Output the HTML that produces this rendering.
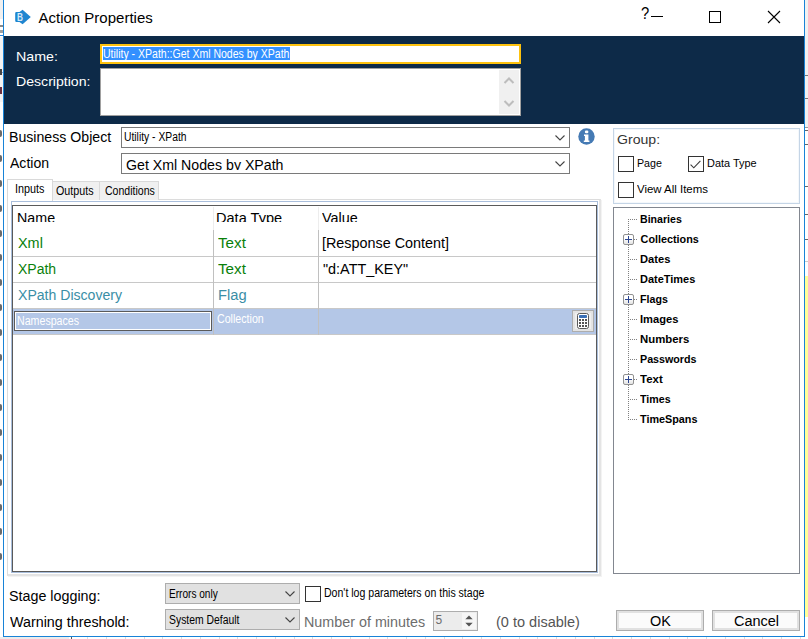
<!DOCTYPE html>
<html lang="en">
<head>
<meta charset="utf-8">
<title>Action Properties</title>
<style>
html,body{margin:0;padding:0;}
body{width:808px;height:639px;position:relative;overflow:hidden;background:#fff;font-family:"Liberation Sans",sans-serif;}
.a{position:absolute;box-sizing:border-box;}
.t{position:absolute;white-space:nowrap;transform-origin:0 0;line-height:normal;font-family:"Liberation Sans",sans-serif;}
svg{position:absolute;overflow:visible;}
.cb{position:absolute;box-sizing:border-box;width:16px;height:16px;border:1px solid #333;background:#fff;}
.hl{position:absolute;height:1px;background:#c8c8c8;}
.vl{position:absolute;width:1px;background:#c0c0c0;}
.dot-h{position:absolute;height:1px;background-image:linear-gradient(to right,#808080 50%,transparent 50%);background-size:2px 1px;}
.dot-v{position:absolute;width:1px;background-image:linear-gradient(to bottom,#808080 50%,transparent 50%);background-size:1px 2px;}
.plus{position:absolute;box-sizing:border-box;width:11px;height:11px;border:1px solid #919191;border-radius:2px;background:linear-gradient(#fff 40%,#e2e2e2);}
.plus:before{content:"";position:absolute;left:1px;top:4px;width:7px;height:1px;background:#2b4590;}
.plus:after{content:"";position:absolute;left:4px;top:1px;width:1px;height:7px;background:#2b4590;}
</style>
</head>
<body>
<!-- background behind dialog -->
<div class="a" id="bg-left" style="left:0;top:0;width:3px;height:639px;background:#fff;"></div>
<div class="a" style="left:0;top:0;width:3px;height:19px;background:#f0f0f0;"></div>
<div class="a" style="left:0;top:25px;width:3px;height:2px;background:#8a8a8a;"></div>
<div class="a" style="left:0;top:30px;width:3px;height:3px;background:#a0a0a0;"></div>
<div class="a" style="left:0;top:35px;width:3px;height:1px;background:#2b7fd6;"></div>
<div class="a" style="left:0;top:37px;width:3px;height:65px;background:#f4f4f4;"></div>
<div class="a" style="left:0;top:72px;width:3px;height:1px;background:#7aa7dc;"></div>
<div class="a" style="left:0;top:130px;width:2px;height:7px;background:#6a6a6a;border-radius:0 2px 2px 0;"></div><div class="a" style="left:0;top:155px;width:2px;height:7px;background:#6a6a6a;border-radius:0 2px 2px 0;"></div><div class="a" style="left:0;top:180px;width:2px;height:7px;background:#6a6a6a;border-radius:0 2px 2px 0;"></div><div class="a" style="left:0;top:205px;width:2px;height:7px;background:#6a6a6a;border-radius:0 2px 2px 0;"></div><div class="a" style="left:0;top:230px;width:2px;height:7px;background:#6a6a6a;border-radius:0 2px 2px 0;"></div><div class="a" style="left:0;top:254px;width:2px;height:7px;background:#6a6a6a;border-radius:0 2px 2px 0;"></div><div class="a" style="left:0;top:279px;width:2px;height:7px;background:#6a6a6a;border-radius:0 2px 2px 0;"></div><div class="a" style="left:0;top:304px;width:2px;height:7px;background:#6a6a6a;border-radius:0 2px 2px 0;"></div><div class="a" style="left:0;top:329px;width:2px;height:7px;background:#6a6a6a;border-radius:0 2px 2px 0;"></div><div class="a" style="left:0;top:354px;width:2px;height:7px;background:#6a6a6a;border-radius:0 2px 2px 0;"></div><div class="a" style="left:0;top:379px;width:2px;height:7px;background:#6a6a6a;border-radius:0 2px 2px 0;"></div><div class="a" style="left:0;top:404px;width:2px;height:7px;background:#6a6a6a;border-radius:0 2px 2px 0;"></div><div class="a" style="left:0;top:429px;width:2px;height:7px;background:#6a6a6a;border-radius:0 2px 2px 0;"></div><div class="a" style="left:0;top:454px;width:2px;height:7px;background:#6a6a6a;border-radius:0 2px 2px 0;"></div><div class="a" style="left:0;top:479px;width:2px;height:7px;background:#6a6a6a;border-radius:0 2px 2px 0;"></div><div class="a" style="left:0;top:504px;width:2px;height:7px;background:#6a6a6a;border-radius:0 2px 2px 0;"></div><div class="a" style="left:0;top:528px;width:2px;height:7px;background:#6a6a6a;border-radius:0 2px 2px 0;"></div><div class="a" style="left:0;top:553px;width:2px;height:7px;background:#6a6a6a;border-radius:0 2px 2px 0;"></div><div class="a" style="left:0;top:69px;width:2px;height:6px;background:#444;"></div><div class="a" style="left:0;top:87px;width:2px;height:7px;background:#6a3040;"></div>
<div class="a" id="bg-right" style="left:805px;top:0;width:3px;height:639px;background:#fff;"></div>
<div class="a" style="left:805px;top:0;width:3px;height:127px;background:#f1f1f1;"></div>
<div class="a" style="left:805px;top:75px;width:3px;height:1px;background:#777;"></div>
<div class="a" style="left:805px;top:98px;width:3px;height:1px;background:#777;"></div>
<div class="a" style="left:805px;top:127px;width:3px;height:1px;background:#9a9a9a;"></div>
<div class="a" style="left:805px;top:130px;width:3px;height:1px;background:#666;"></div>
<div class="a" style="left:805px;top:144px;width:3px;height:1px;background:#666;"></div>
<div class="a" style="left:805px;top:186px;width:3px;height:1px;background:#666;"></div>
<div class="a" style="left:805px;top:214px;width:3px;height:1px;background:#666;"></div>
<div class="a" style="left:805px;top:239px;width:3px;height:1px;background:#666;"></div>
<div class="a" style="left:805px;top:261px;width:3px;height:1px;background:#ccc;"></div>
<div class="a" style="left:805px;top:276px;width:3px;height:341px;background:#ffff99;"></div>
<div class="a" id="bg-bottom" style="left:0;top:637px;width:808px;height:2px;background:#fff;"></div>
<div class="a" style="left:0;top:637px;width:69px;height:2px;background:#ececec;"></div>
<div class="a" style="left:71px;top:637px;width:1px;height:2px;background:#555;"></div>
<div class="a" style="left:87px;top:637px;width:1px;height:2px;background:#dcdcdc;"></div><div class="a" style="left:106px;top:637px;width:1px;height:2px;background:#dcdcdc;"></div><div class="a" style="left:125px;top:637px;width:1px;height:2px;background:#dcdcdc;"></div><div class="a" style="left:144px;top:637px;width:1px;height:2px;background:#dcdcdc;"></div><div class="a" style="left:162px;top:637px;width:1px;height:2px;background:#dcdcdc;"></div><div class="a" style="left:181px;top:637px;width:1px;height:2px;background:#dcdcdc;"></div><div class="a" style="left:200px;top:637px;width:1px;height:2px;background:#dcdcdc;"></div><div class="a" style="left:219px;top:637px;width:1px;height:2px;background:#dcdcdc;"></div><div class="a" style="left:237px;top:637px;width:1px;height:2px;background:#dcdcdc;"></div><div class="a" style="left:256px;top:637px;width:1px;height:2px;background:#dcdcdc;"></div><div class="a" style="left:275px;top:637px;width:1px;height:2px;background:#dcdcdc;"></div><div class="a" style="left:294px;top:637px;width:1px;height:2px;background:#dcdcdc;"></div><div class="a" style="left:312px;top:637px;width:1px;height:2px;background:#dcdcdc;"></div><div class="a" style="left:331px;top:637px;width:1px;height:2px;background:#dcdcdc;"></div><div class="a" style="left:350px;top:637px;width:1px;height:2px;background:#dcdcdc;"></div><div class="a" style="left:369px;top:637px;width:1px;height:2px;background:#dcdcdc;"></div><div class="a" style="left:387px;top:637px;width:1px;height:2px;background:#dcdcdc;"></div><div class="a" style="left:406px;top:637px;width:1px;height:2px;background:#dcdcdc;"></div><div class="a" style="left:425px;top:637px;width:1px;height:2px;background:#dcdcdc;"></div><div class="a" style="left:444px;top:637px;width:1px;height:2px;background:#dcdcdc;"></div><div class="a" style="left:462px;top:637px;width:1px;height:2px;background:#dcdcdc;"></div><div class="a" style="left:481px;top:637px;width:1px;height:2px;background:#dcdcdc;"></div><div class="a" style="left:500px;top:637px;width:1px;height:2px;background:#dcdcdc;"></div><div class="a" style="left:519px;top:637px;width:1px;height:2px;background:#dcdcdc;"></div><div class="a" style="left:537px;top:637px;width:1px;height:2px;background:#dcdcdc;"></div><div class="a" style="left:556px;top:637px;width:1px;height:2px;background:#dcdcdc;"></div><div class="a" style="left:575px;top:637px;width:1px;height:2px;background:#dcdcdc;"></div><div class="a" style="left:594px;top:637px;width:1px;height:2px;background:#dcdcdc;"></div><div class="a" style="left:612px;top:637px;width:1px;height:2px;background:#dcdcdc;"></div><div class="a" style="left:631px;top:637px;width:1px;height:2px;background:#dcdcdc;"></div><div class="a" style="left:650px;top:637px;width:1px;height:2px;background:#dcdcdc;"></div><div class="a" style="left:669px;top:637px;width:1px;height:2px;background:#dcdcdc;"></div><div class="a" style="left:687px;top:637px;width:1px;height:2px;background:#dcdcdc;"></div><div class="a" style="left:706px;top:637px;width:1px;height:2px;background:#dcdcdc;"></div><div class="a" style="left:725px;top:637px;width:1px;height:2px;background:#dcdcdc;"></div><div class="a" style="left:744px;top:637px;width:1px;height:2px;background:#dcdcdc;"></div><div class="a" style="left:762px;top:637px;width:1px;height:2px;background:#dcdcdc;"></div><div class="a" style="left:781px;top:637px;width:1px;height:2px;background:#dcdcdc;"></div><div class="a" style="left:800px;top:637px;width:1px;height:2px;background:#dcdcdc;"></div>
<!-- dialog -->
<div class="a" id="dlg" style="left:3px;top:-1px;width:802px;height:638px;border:1px solid #1883d7;background:#fff;"></div>
<!-- title bar icon -->
<svg style="left:14px;top:9px;" width="18" height="16" viewBox="0 0 18 16">
  <path d="M1.2 4.2 Q1.2 3 2.4 3 L5.5 3 L8.6 0.8 L16.8 8 L8.6 15.2 L5.5 13 L2.4 13 Q1.2 13 1.2 11.8 Z" fill="#1f86d0"/>
</svg>
<span class="t" style="left:16.8px;top:10.9px;font-size:11.5px;font-weight:bold;color:#d6e8f8;transform:scaleX(0.72);">B</span>
<!-- window controls -->
<div class="a" style="left:651px;top:16px;width:12px;height:1px;background:#000;"></div>
<div class="a" style="left:709px;top:11px;width:12px;height:12px;border:1px solid #000;"></div>
<svg style="left:768px;top:11px;" width="12" height="12" viewBox="0 0 12 12"><path d="M0 0 L12 12 M12 0 L0 12" stroke="#000" stroke-width="1.1" fill="none"/></svg>

<!-- navy header -->
<div class="a" id="navy" style="left:4px;top:36px;width:800px;height:88px;background:#0d2a48;"></div>
<div class="a" id="name-in" style="left:100px;top:44px;width:421px;height:20px;border:2px solid #fdc20f;background:#fff;"></div>
<div class="a" id="name-sel" style="left:103px;top:47px;width:187px;height:13px;background:#3390ff;"></div>
<div class="a" id="desc" style="left:100px;top:68px;width:421px;height:48px;border:1px solid #a0a0a0;background:#fff;"></div>
<div class="a" id="desc-sb" style="left:499px;top:70px;width:20px;height:44px;background:#f0f0f0;"></div>
<svg style="left:504px;top:77px;" width="10" height="30" viewBox="0 0 10 30"><path d="M0.5 6 L5 1.5 L9.5 6 M0.5 24 L5 28.5 L9.5 24" stroke="#bdbdbd" stroke-width="2" fill="none"/></svg>

<!-- Business Object / Action combos -->
<div class="a" id="cmb1" style="left:121px;top:127px;width:449px;height:21px;border:1px solid #7a7a7a;background:#fff;"></div>
<svg style="left:554.5px;top:135px;" width="10" height="6" viewBox="0 0 10 6"><path d="M0.5 0.5 L5 5 L9.5 0.5" stroke="#444" stroke-width="1.1" fill="none"/></svg>
<div class="a" id="cmb2" style="left:121px;top:153px;width:449px;height:21px;border:1px solid #7a7a7a;background:#fff;overflow:hidden;">
  <span class="t" id="cmb2t" style="left:3.9px;top:3.1px;font-size:14px;color:#000;transform:scaleX(1.012);clip-path:inset(0 0 3.2px 0);">Get Xml Nodes by XPath</span>
</div>
<svg style="left:554.5px;top:161px;" width="10" height="6" viewBox="0 0 10 6"><path d="M0.5 0.5 L5 5 L9.5 0.5" stroke="#444" stroke-width="1.1" fill="none"/></svg>
<!-- info icon -->
<svg style="left:577.5px;top:127.7px;" width="17" height="17" viewBox="0 0 17 17"><circle cx="8.5" cy="8.5" r="8.2" fill="#457ab4"/><rect x="6.9" y="2.4" width="3.5" height="2.9" rx="1.3" fill="#fff"/><path d="M6 6.6 H10.4 V12.6 H11.4 V13.9 H5.8 V12.6 H6.9 V7.9 H6 Z" fill="#fff"/></svg>

<!-- tabs -->
<div class="a" id="tabpanel" style="left:7px;top:199px;width:594px;height:377px;border:1px solid #dcdcdc;border-right:2px solid #e4e4e4;border-bottom:2px solid #e4e4e4;box-shadow:1px 1px 0 #f3f3f3;background:#fff;"></div>
<div class="a" id="tab2" style="left:52px;top:181px;width:48px;height:19px;border:1px solid #d9d9d9;border-bottom:none;background:#f0f0f0;"></div>
<div class="a" id="tab3" style="left:99px;top:181px;width:60px;height:19px;border:1px solid #d9d9d9;border-bottom:none;background:#f0f0f0;"></div>
<div class="a" id="tab1" style="left:7px;top:179px;width:46px;height:22px;border:1px solid #d9d9d9;border-bottom:none;background:#fff;"></div>

<!-- list box -->
<div class="a" id="lb-outer" style="left:11px;top:201px;width:587px;height:372px;border:1px solid #a9bedb;"></div>
<div class="a" id="listbox" style="left:12px;top:205px;width:585px;height:367px;border:1px solid #5a5a5a;background:#fff;overflow:hidden;">
  <span class="t" style="left:3.9px;top:4.2px;font-size:14px;color:#000;clip-path:inset(0 0 4.2px 0);transform:scaleX(1.02);">Name</span>
  <span class="t" style="left:203.4px;top:4.2px;font-size:14px;color:#000;clip-path:inset(0 0 4.2px 0);transform:scaleX(1.04);">Data Type</span>
  <span class="t" style="left:308.9px;top:4.2px;font-size:14px;color:#000;clip-path:inset(0 0 4.2px 0);transform:scaleX(1.03);">Value</span>
</div>
<div class="vl" style="left:213px;top:207px;height:23px;background:#ededed;"></div>
<div class="vl" style="left:318px;top:207px;height:23px;background:#ededed;"></div>
<div class="a" id="selrow" style="left:13px;top:308px;width:583px;height:27px;background:#b4c7e7;"></div>
<div class="hl" style="left:13px;top:256px;width:583px;"></div>
<div class="hl" style="left:13px;top:282px;width:583px;"></div>
<div class="hl" style="left:13px;top:308px;width:583px;"></div>
<div class="hl" style="left:13px;top:334px;width:583px;"></div>
<div class="vl" style="left:213px;top:230px;height:105px;"></div>
<div class="vl" style="left:318px;top:230px;height:105px;"></div>
<div class="a" id="editbox" style="left:14px;top:311px;width:198px;height:20px;border:1px solid #5a5a5a;box-shadow:inset 0 0 0 1px #fff;background:#b4c7e7;"></div>
<!-- calculator button -->
<div class="a" id="calcbtn" style="left:572px;top:310px;width:22px;height:22px;border:1px solid #adadad;background:#efefef;box-shadow:inset 0 0 0 2px #e3e3e3;"></div>
<svg style="left:577px;top:313px;" width="12" height="16" viewBox="0 0 12 16">
  <rect x="0.5" y="0.5" width="11" height="15" rx="2" fill="#fff" stroke="#5a5a5a" stroke-width="1"/>
  <rect x="2" y="2" width="8" height="3" rx="0.8" fill="#3a6fb5"/>
  <g fill="#555"><rect x="2" y="6" width="2" height="2"/><rect x="5" y="6" width="2" height="2"/><rect x="8" y="6" width="2" height="2"/>
  <rect x="2" y="9" width="2" height="2"/><rect x="5" y="9" width="2" height="2"/><rect x="8" y="9" width="2" height="2"/>
  <rect x="2" y="12" width="2" height="2"/><rect x="5" y="12" width="2" height="2"/><rect x="8" y="12" width="2" height="2"/></g>
</svg>

<!-- group box -->
<div class="a" id="grp" style="left:613px;top:128px;width:187px;height:76px;border:1px solid #c5d5e6;box-shadow:inset 0 0 0 1px #f4f8fc;"></div>
<div class="cb" style="left:618px;top:156px;"></div>
<div class="cb" style="left:688px;top:156px;"></div>
<svg style="left:690px;top:159.7px;" width="11" height="9" viewBox="0 0 11 9"><path d="M0.6 4.6 L3.8 7.8 L10.4 0.8" stroke="#3a3a3a" stroke-width="1.1" fill="none"/></svg>
<div class="cb" style="left:618px;top:182px;"></div>

<!-- tree box -->
<div class="a" id="tree" style="left:613px;top:207px;width:187px;height:367px;border:1px solid #828790;background:#fff;"></div>
<div class="dot-v" style="left:628px;top:219px;height:201px;"></div>
<div class="dot-h" style="left:630px;top:219px;width:7px;"></div>
<div class="dot-h" style="left:634px;top:239px;width:4px;"></div>
<div class="plus" style="left:623px;top:234px;"></div>
<div class="dot-h" style="left:630px;top:259px;width:7px;"></div>
<div class="dot-h" style="left:630px;top:279px;width:7px;"></div>
<div class="dot-h" style="left:634px;top:299px;width:4px;"></div>
<div class="plus" style="left:623px;top:294px;"></div>
<div class="dot-h" style="left:630px;top:319px;width:7px;"></div>
<div class="dot-h" style="left:630px;top:339px;width:7px;"></div>
<div class="dot-h" style="left:630px;top:359px;width:7px;"></div>
<div class="dot-h" style="left:634px;top:379px;width:4px;"></div>
<div class="plus" style="left:623px;top:374px;"></div>
<div class="dot-h" style="left:630px;top:399px;width:7px;"></div>
<div class="dot-h" style="left:630px;top:419px;width:7px;"></div>

<!-- bottom controls -->
<div class="a" id="cmb3" style="left:165px;top:583px;width:135px;height:21px;border:1px solid #adadad;background:#e1e1e1;"></div>
<svg style="left:285px;top:591px;" width="10" height="6" viewBox="0 0 10 6"><path d="M0.5 0.5 L5 5 L9.5 0.5" stroke="#444" stroke-width="1.1" fill="none"/></svg>
<div class="a" id="cmb4" style="left:165px;top:609px;width:135px;height:21px;border:1px solid #adadad;background:#e1e1e1;"></div>
<svg style="left:285px;top:617px;" width="10" height="6" viewBox="0 0 10 6"><path d="M0.5 0.5 L5 5 L9.5 0.5" stroke="#444" stroke-width="1.1" fill="none"/></svg>
<div class="cb" style="left:305px;top:586px;"></div>
<div class="a" id="spin" style="left:433px;top:611px;width:45px;height:20px;border:1px solid #adadad;background:#ececec;"></div>
<div class="a" id="spinbtn" style="left:462px;top:613px;width:14px;height:16px;background:#f6f6f6;"></div>
<svg style="left:465px;top:615px;" width="8" height="12" viewBox="0 0 8 12"><path d="M0.3 4.2 L4 0.4 L7.7 4.2 Z M0.3 7.8 L4 11.6 L7.7 7.8 Z" fill="#555"/></svg>
<div class="a" id="okbtn" style="left:616px;top:610px;width:88px;height:21px;border:1px solid #adadad;box-shadow:inset 0 0 0 2px #e1e1e1;background:#fbfbfb;"></div>
<div class="a" id="cancelbtn" style="left:712px;top:610px;width:88px;height:21px;border:1px solid #adadad;box-shadow:inset 0 0 0 2px #e1e1e1;background:#fbfbfb;"></div>

<span class="t" style="left:38.50px;top:9.22px;font-size:15px;color:#000;transform:scaleX(1.0000);">Action Properties</span>
<span class="t" style="left:16.49px;top:48.85px;font-size:13.2px;color:#fff;transform:scaleX(1.0795);">Name:</span>
<span class="t" style="left:16.04px;top:73.55px;font-size:13.2px;color:#fff;transform:scaleX(1.0693);">Description:</span>
<span class="t" style="left:102.83px;top:46.94px;font-size:12px;color:#fff;transform:scaleX(0.8762);">Utility - XPath::Get Xml Nodes by XPath</span>
<span class="t" style="left:9.00px;top:129.18px;font-size:14.5px;color:#000;transform:scaleX(0.9752);">Business Object</span>
<span class="t" style="left:9.72px;top:155.18px;font-size:14.5px;color:#000;transform:scaleX(0.9689);">Action</span>
<span class="t" style="left:124.35px;top:130.14px;font-size:12px;color:#000;transform:scaleX(0.8601);">Utility - XPath</span>
<span class="t" style="left:14.86px;top:182.44px;font-size:12px;color:#000;transform:scaleX(0.9005);">Inputs</span>
<span class="t" style="left:56.14px;top:184.34px;font-size:12px;color:#000;transform:scaleX(0.8939);">Outputs</span>
<span class="t" style="left:105.09px;top:184.34px;font-size:12px;color:#000;transform:scaleX(0.8775);">Conditions</span>
<span class="t" style="left:17.84px;top:234.83px;font-size:14px;color:#0a800a;transform:scaleX(1.0304);">Xml</span>
<span class="t" style="left:217.58px;top:234.83px;font-size:14px;color:#0a800a;transform:scaleX(1.0873);">Text</span>
<span class="t" style="left:321.99px;top:234.83px;font-size:14px;color:#000;transform:scaleX(1.0261);">[Response Content]</span>
<span class="t" style="left:18.00px;top:261.03px;font-size:14px;color:#0a800a;transform:scaleX(1.0000);">XPath</span>
<span class="t" style="left:217.58px;top:261.03px;font-size:14px;color:#0a800a;transform:scaleX(1.0873);">Text</span>
<span class="t" style="left:322.99px;top:261.03px;font-size:14px;color:#000;transform:scaleX(1.0285);">"d:ATT_KEY"</span>
<span class="t" style="left:17.84px;top:287.03px;font-size:14px;color:#3a8ea6;transform:scaleX(1.0051);">XPath Discovery</span>
<span class="t" style="left:217.77px;top:287.03px;font-size:14px;color:#3a8ea6;transform:scaleX(1.0501);">Flag</span>
<span class="t" style="left:16.92px;top:314.14px;font-size:12px;color:#fff;transform:scaleX(0.8867);">Namespaces</span>
<span class="t" style="left:216.59px;top:312.14px;font-size:12px;color:#fff;transform:scaleX(0.8875);">Collection</span>
<span class="t" style="left:617.18px;top:131.69px;font-size:13.6px;color:#333;transform:scaleX(1.0358);">Group:</span>
<span class="t" style="left:637.38px;top:157.43px;font-size:10.8px;color:#000;transform:scaleX(0.9872);">Page</span>
<span class="t" style="left:707.14px;top:157.43px;font-size:10.8px;color:#000;transform:scaleX(1.0109);">Data Type</span>
<span class="t" style="left:636.98px;top:183.23px;font-size:10.8px;color:#000;transform:scaleX(1.0591);">View All Items</span>
<span class="t" style="left:640.46px;top:213.03px;font-size:10.8px;color:#000;font-weight:bold;transform:scaleX(0.9804);">Binaries</span>
<span class="t" style="left:640.60px;top:233.03px;font-size:10.8px;color:#000;font-weight:bold;transform:scaleX(1.0000);">Collections</span>
<span class="t" style="left:640.15px;top:253.03px;font-size:10.8px;color:#000;font-weight:bold;transform:scaleX(1.0324);">Dates</span>
<span class="t" style="left:640.16px;top:273.03px;font-size:10.8px;color:#000;font-weight:bold;transform:scaleX(1.0152);">DateTimes</span>
<span class="t" style="left:640.19px;top:293.03px;font-size:10.8px;color:#000;font-weight:bold;transform:scaleX(0.9860);">Flags</span>
<span class="t" style="left:640.15px;top:313.03px;font-size:10.8px;color:#000;font-weight:bold;transform:scaleX(1.0316);">Images</span>
<span class="t" style="left:640.13px;top:333.03px;font-size:10.8px;color:#000;font-weight:bold;transform:scaleX(1.0540);">Numbers</span>
<span class="t" style="left:640.46px;top:353.03px;font-size:10.8px;color:#000;font-weight:bold;transform:scaleX(0.9910);">Passwords</span>
<span class="t" style="left:640.19px;top:373.03px;font-size:10.8px;color:#000;font-weight:bold;transform:scaleX(1.0610);">Text</span>
<span class="t" style="left:640.24px;top:393.03px;font-size:10.8px;color:#000;font-weight:bold;transform:scaleX(0.9849);">Times</span>
<span class="t" style="left:640.00px;top:413.03px;font-size:10.8px;color:#000;font-weight:bold;transform:scaleX(1.0000);">TimeSpans</span>
<span class="t" style="left:8.81px;top:587.93px;font-size:14px;color:#000;transform:scaleX(1.0217);">Stage logging:</span>
<span class="t" style="left:9.51px;top:614.13px;font-size:14px;color:#000;transform:scaleX(1.0220);">Warning threshold:</span>
<span class="t" style="left:168.62px;top:587.34px;font-size:12px;color:#000;transform:scaleX(0.8405);">Errors only</span>
<span class="t" style="left:168.95px;top:613.34px;font-size:12px;color:#000;transform:scaleX(0.8660);">System Default</span>
<span class="t" style="left:323.78px;top:586.34px;font-size:12px;color:#000;transform:scaleX(0.8795);">Don't log parameters on this stage</span>
<span class="t" style="left:304.46px;top:613.83px;font-size:14px;color:#6d6d6d;transform:scaleX(1.0238);">Number of minutes</span>
<span class="t" style="left:435.60px;top:612.74px;font-size:12px;color:#6d6d6d;transform:scaleX(1.0000);">5</span>
<span class="t" style="left:495.76px;top:613.93px;font-size:14px;color:#555;transform:scaleX(1.0370);">(0 to disable)</span>
<span class="t" style="left:649.80px;top:613.13px;font-size:14px;color:#000;transform:scaleX(1.0310);">OK</span>
<span class="t" style="left:733.76px;top:613.13px;font-size:14px;color:#000;transform:scaleX(1.0342);">Cancel</span>
<span class="t" style="left:641.27px;top:4.07px;font-size:16.5px;color:#000;transform:scaleX(0.8964);">?</span>
</body>
</html>
